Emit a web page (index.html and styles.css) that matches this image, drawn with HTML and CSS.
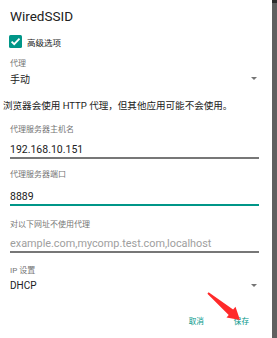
FILE: index.html
```html
<!DOCTYPE html>
<html lang="zh">
<head>
<meta charset="utf-8">
<link rel="stylesheet" href="styles.css">
</head>
<body>
<div class="screen">
  <div class="dialog">
    <div class="title">WiredSSID</div>
    <div class="check-row">
      <span class="checkbox">
        <svg width="13" height="13" viewBox="0 0 13 13"><path d="M2.6 6.6 L5.2 9.2 L10.5 3.6" fill="none" stroke="#fff" stroke-width="1.8"/></svg>
      </span>
      <span class="check-label">高级选项</span>
    </div>
    <div class="label lbl-proxy">代理</div>
    <div class="select sel-proxy"><span>手动</span><span class="caret"></span></div>
    <div class="note">浏览器会使用 HTTP 代理，但其他应用可能不会使用。</div>
    <div class="label lbl-host">代理服务器主机名</div>
    <div class="field field-host">192.168.10.151</div>
    <div class="label lbl-port">代理服务器端口</div>
    <div class="field field-port focused">8889</div>
    <div class="label lbl-bypass">对以下网址不使用代理</div>
    <div class="field field-bypass placeholder">example.com,mycomp.test.com,localhost</div>
    <div class="label lbl-ip">IP 设置</div>
    <div class="select sel-ip"><span>DHCP</span><span class="caret"></span></div>
    <div class="buttons">
      <span class="btn">取消</span>
      <span class="btn">保存</span>
    </div>
    <svg class="red-arrow" width="277" height="338" viewBox="0 0 277 338">
      <polygon points="207.4,293.8 208.6,292.2 233.1,309.6 235.5,306.8 240,320 226.5,317.5 228.7,314.9" fill="#ff2a2a"/>
    </svg>
  </div>
  <div class="strip"><div class="strip-top"></div></div>
</div>
</body>
</html>
```

FILE: styles.css
```css
html, body {
  margin: 0;
  padding: 0;
  background: #fff;
}
body {
  font-family: Roboto, "Noto Sans CJK SC", sans-serif;
  color: #212121;
}
.screen {
  display: flex;
  width: 277px;
  height: 338px;
  overflow: hidden;
}
.dialog {
  position: relative;
  width: 272px;
  box-sizing: border-box;
  padding: 8px 13px 0 10px;
  background: #fff;
}
.strip {
  width: 5px;
  background: #606060;
}
.strip-top {
  height: 3px;
  background: #2b2b2b;
}
.title {
  height: 17px;
  line-height: 17px;
  font-size: 13.5px;
  font-weight: 400;
  color: #212121;
}
.check-row {
  margin-top: 7px;
  height: 19px;
  display: flex;
  align-items: center;
  margin-left: -1px;
}
.checkbox {
  width: 13px;
  height: 13px;
  border-radius: 1.5px;
  background: #009688;
  display: flex;
}
.check-label {
  margin-left: 5px;
  font-size: 8.5px;
  color: #212121;
}
.label {
  font-size: 8px;
  color: #757575;
  height: 14px;
  line-height: 14px;
}
.lbl-proxy { margin-top: 6px; height: 13px; line-height: 13px; }
.lbl-host { margin-top: 9px; }
.lbl-port { margin-top: 9px; }
.lbl-bypass { margin-top: 11px; height: 15px; line-height: 15px; }
.lbl-ip { margin-top: 11px; height: 13px; line-height: 13px; }
.select {
  display: flex;
  justify-content: space-between;
  align-items: center;
  padding-right: 2px;
  font-size: 10px;
  color: #212121;
}
.sel-proxy { margin-top: 1px; height: 15px; }
.sel-ip { height: 16px; }
.caret {
  width: 0;
  height: 0;
  border-left: 3px solid transparent;
  border-right: 3px solid transparent;
  border-top: 3px solid #757575;
}
.note {
  margin-top: 12px;
  margin-left: -7px;
  height: 16px;
  line-height: 16px;
  font-size: 9.55px;
  color: #212121;
  white-space: nowrap;
}
.field {
  height: 14px;
  line-height: 14px;
  font-size: 10.5px;
  color: #212121;
  border-bottom: 2px solid #777;
  white-space: nowrap;
}
.field-host { margin-top: 6px; }
.field-port { margin-top: 8px; }
.field-bypass { margin-top: 5px; font-size: 10.85px; }
.focused { border-bottom-color: #009688; }
.placeholder { color: #9e9e9e; }
.buttons {
  margin-top: 20px;
  height: 15px;
  display: flex;
  justify-content: flex-end;
  align-items: center;
  gap: 30px;
  padding-right: 10px;
}
.btn {
  font-size: 7.6px;
  color: #009688;
}
.red-arrow {
  position: absolute;
  left: 0;
  top: 0;
  pointer-events: none;
}
```
